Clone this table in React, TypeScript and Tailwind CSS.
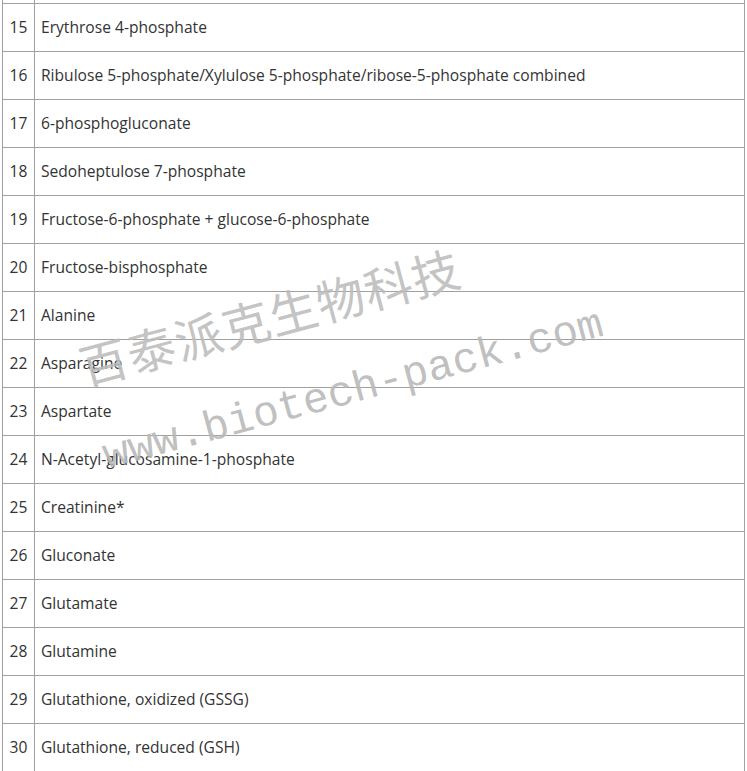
const rows: [string, string][] = [
  ["14", ""],
  ["15", "Erythrose 4-phosphate"],
  ["16", "Ribulose 5-phosphate/Xylulose 5-phosphate/ribose-5-phosphate combined"],
  ["17", "6-phosphogluconate"],
  ["18", "Sedoheptulose 7-phosphate"],
  ["19", "Fructose-6-phosphate + glucose-6-phosphate"],
  ["20", "Fructose-bisphosphate"],
  ["21", "Alanine"],
  ["22", "Asparagine"],
  ["23", "Aspartate"],
  ["24", "N-Acetyl-glucosamine-1-phosphate"],
  ["25", "Creatinine*"],
  ["26", "Gluconate"],
  ["27", "Glutamate"],
  ["28", "Glutamine"],
  ["29", "Glutathione, oxidized (GSSG)"],
  ["30", "Glutathione, reduced (GSH)"],
];

const App = () => {
  return (
    <div className="relative h-[771px] w-[747px] overflow-hidden bg-white font-['Open_Sans',sans-serif] text-[15.6px] text-[#333]">
      <div className="-mt-[44px] ml-[2px] w-[743px] border-x border-[#a0a0a0]">
        {rows.map(([n, name]) => (
          <div key={n} className="flex h-[48px] border-b border-[#a0a0a0]">
            <div className="flex w-[32px] shrink-0 items-center justify-center border-r border-[#a0a0a0]">{n}</div>
            <div className="flex items-center pl-[6px]">{name}</div>
          </div>
        ))}
      </div>

      {/* watermark */}
      <div className="pointer-events-none absolute left-[80px] top-[342px] origin-left -rotate-[15deg] whitespace-nowrap font-['Noto_Sans_CJK_SC',sans-serif] text-[48px] font-normal leading-none tracking-[1px] text-[#bcbcbc]/90">
        百泰派克生物科技
      </div>
      <div className="pointer-events-none absolute left-[104px] top-[436px] origin-left -rotate-[15deg] whitespace-nowrap font-['Liberation_Mono',monospace] text-[43px] leading-none text-[#b8b8b8]/90">
        www.biotech-pack.com
      </div>
    </div>
  );
};

export default App;
